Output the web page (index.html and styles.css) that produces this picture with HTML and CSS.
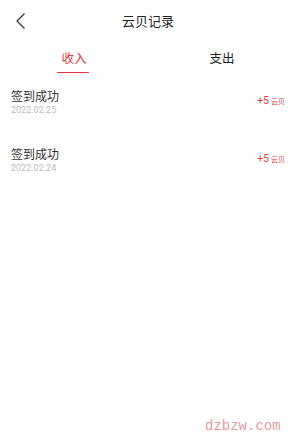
FILE: index.html
```html
<!DOCTYPE html>
<html lang="zh">
<head>
<meta charset="utf-8">
<link rel="stylesheet" href="styles.css">
</head>
<body>
<div class="page">
  <header class="nav">
    <span class="back">
      <svg width="12" height="18" viewBox="0 0 12 18"><path d="M9.5 1.5 L2 9 L9.5 16.5" fill="none" stroke="#333" stroke-width="1.2"/></svg>
    </span>
    <h1 class="title">云贝记录</h1>
  </header>
  <nav class="tabs">
    <div class="tab active">收入</div>
    <div class="tab">支出</div>
  </nav>
  <ul class="list">
    <li class="row">
      <div class="info">
        <div class="name">签到成功</div>
        <div class="date">2022.02.25</div>
      </div>
      <div class="amount">+5<span class="unit">云贝</span></div>
    </li>
    <li class="row">
      <div class="info">
        <div class="name">签到成功</div>
        <div class="date">2022.02.24</div>
      </div>
      <div class="amount">+5<span class="unit">云贝</span></div>
    </li>
  </ul>
  <div class="watermark">dzbzw.com</div>
</div>
</body>
</html>
```
FILE: styles.css
```css
* { box-sizing: border-box; }
html, body { margin: 0; padding: 0; background: #fff; }
body {
  font-family: "Noto Sans CJK SC", "Noto Sans", sans-serif;
  color: #333;
  width: 296px;
  height: 438px;
  overflow: hidden;
}
.page { position: relative; height: 438px; }
.nav {
  position: relative;
  height: 42px;
  display: flex;
  align-items: center;
  justify-content: center;
}
.back {
  position: absolute;
  left: 15px;
  top: 12px;
  display: flex;
}
.title {
  margin: 0;
  font-size: 13px;
  font-weight: normal;
  line-height: 42px;
  color: #222;
}
.tabs {
  display: flex;
  height: 32px;
}
.tab {
  flex: 1;
  display: flex;
  justify-content: center;
  align-items: center;
  font-size: 12.5px;
  color: #222;
  position: relative;
  padding-bottom: 2px;
}
.tab.active { color: #e0393e; }
.tab.active::after {
  content: "";
  position: absolute;
  left: 50%;
  bottom: 1px;
  width: 32px;
  margin-left: -17px;
  height: 1px;
  background: #e0393e;
}
.list { list-style: none; margin: 0; padding: 14px 0 0; }
.row {
  display: flex;
  justify-content: space-between;
  padding: 0 11px 0 11px;
  height: 58px;
  align-items: flex-start;
}
.info { display: flex; flex-direction: column; }
.name { font-size: 12px; line-height: 16px; color: #333; }
.date {
  font-family: Roboto, "Noto Sans", sans-serif;
  font-size: 9px;
  line-height: 12px;
  color: #bcbcbc;
}
.amount {
  font-family: Roboto, "Noto Sans", sans-serif;
  color: #e2413f;
  font-size: 10.5px;
  margin-top: 6px;
  display: flex;
  align-items: baseline;
}
.unit { font-family: "Noto Sans CJK SC", sans-serif; font-size: 7px; margin-left: 2px; }
.watermark {
  position: absolute;
  left: 205px;
  top: 418px;
  font-family: "Liberation Mono", monospace;
  font-size: 14px;
  color: #e89aa0;
}
```
